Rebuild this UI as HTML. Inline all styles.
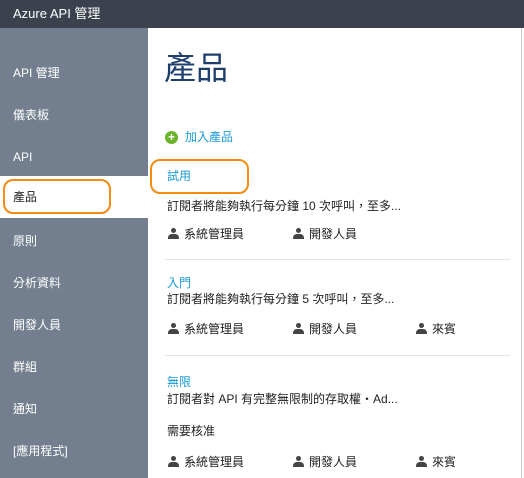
<!DOCTYPE html>
<html><head><meta charset="utf-8"><style>
*{margin:0;padding:0;box-sizing:border-box}
body{width:524px;height:478px;overflow:hidden;background:#fff;font-family:"Liberation Sans","Noto Sans CJK TC",sans-serif;position:relative}
.hdr{position:absolute;left:0;top:0;width:524px;height:28px;background:#3b424d;color:#fff;font-size:13px;line-height:28px;padding-left:13px}
.side{position:absolute;left:0;top:28px;width:148px;height:450px;background:#737f8e}
.si{position:absolute;left:13px;color:#fff;font-size:12px;line-height:16px}
.sel{position:absolute;left:0;top:176px;width:148px;height:42px;background:#fff}
.box{position:absolute;border:2.5px solid #f68b12;border-radius:10px}
.t{position:absolute;font-size:12px;line-height:16px;color:#222}
.lk{color:#1a9ad6}
.rl{position:absolute;font-size:12px;line-height:16px;color:#222;padding-left:17px}
.rl:before{content:"";position:absolute;left:1px;top:2px;width:5px;height:5px;border-radius:50%;background:#444;margin-left:3px}
.rl:after{content:"";position:absolute;left:1px;top:8px;width:11px;height:5px;border-radius:4px 4px 0 0;background:#444}
.hr{position:absolute;left:165px;width:345px;height:1px;background:#e3e3e3}
</style></head><body>
<div class="hdr">Azure API 管理</div>
<div class="side"></div>
<div class="sel"></div>
<div class="si" style="top:65px">API 管理</div>
<div class="si" style="top:107px">儀表板</div>
<div class="si" style="top:149px">API</div>
<div class="si" style="top:189px;color:#222">產品</div>
<div class="si" style="top:233px">原則</div>
<div class="si" style="top:275px">分析資料</div>
<div class="si" style="top:317px">開發人員</div>
<div class="si" style="top:359px">群組</div>
<div class="si" style="top:401px">通知</div>
<div class="si" style="top:443px">[應用程式]</div>
<div class="box" style="left:3px;top:179px;width:108px;height:35px"></div>
<div style="position:absolute;left:521px;top:28px;width:1px;height:450px;background:#ccc"></div>
<div style="position:absolute;left:164px;top:48px;font-size:32px;line-height:40px;color:#1e3f6e">產品</div>
<div style="position:absolute;left:165px;top:131px;width:13px;height:13px;border-radius:50%;background:#6bb52b;color:#fff;font-size:12px;line-height:13px;text-align:center;font-weight:bold">+</div>
<div class="t lk" style="left:185px;top:129px">加入產品</div>
<div class="box" style="left:150px;top:159px;width:99px;height:35px"></div>
<div class="t lk" style="left:167px;top:168px">試用</div>
<div class="t" style="left:167px;top:198px">訂閱者將能夠執行每分鐘 10 次呼叫，至多...</div>
<div class="rl" style="left:167px;top:226px">系統管理員</div>
<div class="rl" style="left:292px;top:226px">開發人員</div>
<div class="hr" style="top:259px"></div>
<div class="t lk" style="left:167px;top:275px">入門</div>
<div class="t" style="left:167px;top:291px">訂閱者將能夠執行每分鐘 5 次呼叫，至多...</div>
<div class="rl" style="left:167px;top:321px">系統管理員</div>
<div class="rl" style="left:292px;top:321px">開發人員</div>
<div class="rl" style="left:415px;top:321px">來賓</div>
<div class="hr" style="top:355px"></div>
<div class="t lk" style="left:167px;top:374px">無限</div>
<div class="t" style="left:167px;top:391px">訂閱者對 API 有完整無限制的存取權・Ad...</div>
<div class="t" style="left:167px;top:423px">需要核准</div>
<div class="rl" style="left:167px;top:454px">系統管理員</div>
<div class="rl" style="left:292px;top:454px">開發人員</div>
<div class="rl" style="left:415px;top:454px">來賓</div>
</body></html>
